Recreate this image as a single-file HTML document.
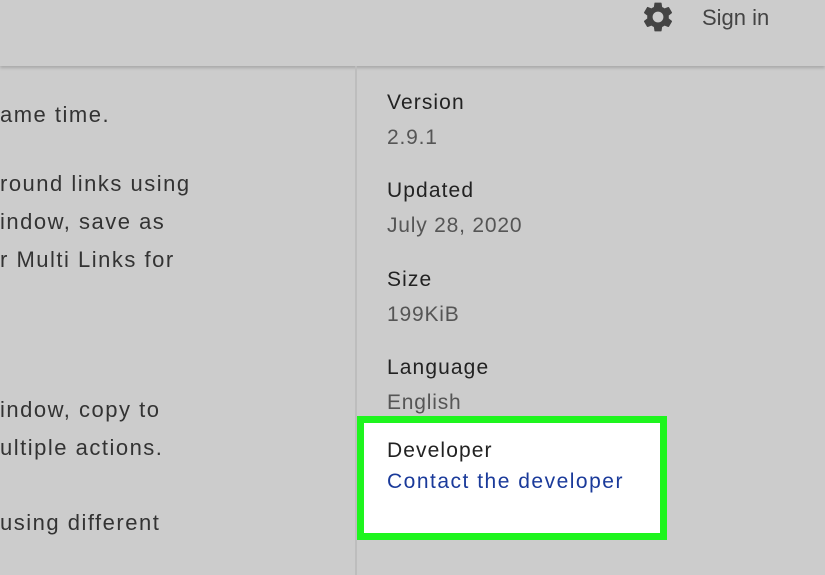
<!DOCTYPE html>
<html><head><style>
body{margin:0;width:825px;height:575px;background:#cccccc;font-family:"Liberation Sans",sans-serif;position:relative;overflow:hidden}
.hdr{position:absolute;left:0;top:0;width:825px;height:66px;background:#cccccc;box-shadow:0 2px 3px rgba(0,0,0,0.18)}
.t{position:absolute;white-space:nowrap}
.l{font-size:22px;color:#333;left:0;letter-spacing:1.5px}
.lab{font-size:21px;color:#222;left:387px;letter-spacing:1.1px}
.val{font-size:21px;color:#555;left:387px;letter-spacing:0.8px}
.div{position:absolute;left:355px;top:66px;width:2px;height:509px;background:#bdbdbd}
.box{position:absolute;left:357px;top:416px;width:296px;height:110px;background:#fff;border:7px solid #1ef51e}
</style></head><body>
<div class="hdr"></div>
<svg style="position:absolute;left:639px;top:-1px" width="38" height="36" viewBox="0 0 24 24"><path fill="#444" d="M19.14 12.94c.04-.3.06-.61.06-.94 0-.32-.02-.64-.07-.94l2.030-1.58a.49.49 0 0 0 .12-.61l-1.920-3.32a.49.49 0 0 0-.59-.22l-2.390.96c-.5-.38-1.030-.7-1.620-.94l-.36-2.54a.48.48 0 0 0-.48-.41h-3.840c-.24 0-.43.17-.47.41l-.36 2.54c-.59.24-1.130.57-1.620.94l-2.390-.96a.48.48 0 0 0-.59.22L2.740 8.870c-.12.21-.08.47.12.61l2.030 1.580c-.05.3-.09.63-.09.94s.02.64.07.94l-2.030 1.580a.49.49 0 0 0-.12.61l1.920 3.320c.12.22.37.29.59.22l2.390-.96c.5.38 1.030.7 1.620.94l.36 2.540c.05.24.24.41.48.41h3.840c.24 0 .44-.17.47-.41l.36-2.540c.59-.24 1.130-.56 1.620-.94l2.390.96c.22.08.47 0 .59-.22l1.920-3.320c.12-.22.07-.47-.12-.61l-2.010-1.580zM12 15.600A3.600 3.600 0 1 1 12 8.400a3.600 3.600 0 0 1 0 7.200z"/></svg>
<div class="t" style="left:702px;top:5px;font-size:22px;color:#444">Sign in</div>
<div class="div"></div>
<div class="t l" style="top:102px">ame time.</div>
<div class="t l" style="top:171px">round links using</div>
<div class="t l" style="top:209px">indow, save as</div>
<div class="t l" style="top:247px">r Multi Links for</div>
<div class="t l" style="top:397px">indow, copy to</div>
<div class="t l" style="top:435px">ultiple actions.</div>
<div class="t l" style="top:510px">using different</div>
<div class="t lab" style="top:91px">Version</div>
<div class="t val" style="top:126px">2.9.1</div>
<div class="t lab" style="top:179px">Updated</div>
<div class="t val" style="top:214px">July 28, 2020</div>
<div class="t lab" style="top:268px">Size</div>
<div class="t val" style="top:303px">199KiB</div>
<div class="t lab" style="top:356px">Language</div>
<div class="t val" style="top:391px">English</div>
<div class="box"></div>
<div class="t lab" style="top:439px">Developer</div>
<div class="t" style="left:387px;top:470px;font-size:21px;color:#1a3a9a;letter-spacing:1.5px">Contact the developer</div>
</body></html>
